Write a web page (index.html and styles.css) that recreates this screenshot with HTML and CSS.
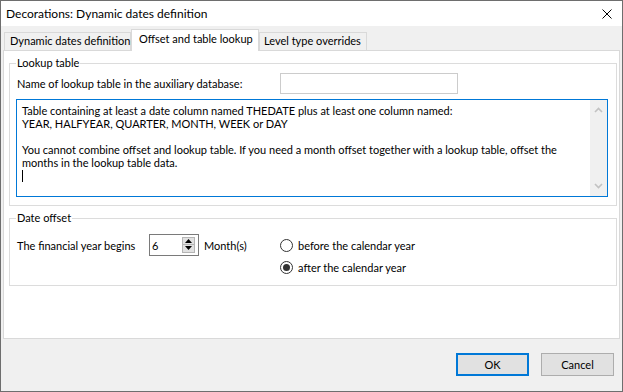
FILE: index.html
```html
<!DOCTYPE html>
<html lang="en">
<head>
    <meta charset="UTF-8">
    <meta name="viewport" content="width=device-width, initial-scale=1.0">
    <title>Decorations: Dynamic dates definition</title>
    <link rel="stylesheet" href="styles.css">
</head>
<body>
    <div class="window">
        <div class="titlebar">
            <span class="title">Decorations: Dynamic dates definition</span>
            <svg class="close" width="10" height="10" viewBox="0 0 10 10">
                <path d="M0.5 0.5 L9.5 9.5 M9.5 0.5 L0.5 9.5" stroke="#000" stroke-width="1" fill="none"/>
            </svg>
        </div>

        <div class="client">
            <div class="tabs">
                <div class="tab tab-dates">Dynamic dates definition</div>
                <div class="tab tab-offset selected">Offset and table lookup</div>
                <div class="tab tab-level">Level type overrides</div>
            </div>

            <div class="page">
                <fieldset class="group group-lookup">
                    <legend>Lookup table</legend>
                    <div class="name-row">
                        <label for="lookupName">Name of lookup table in the auxiliary database:</label>
                        <input type="text" id="lookupName" class="textbox">
                    </div>
                    <div class="memo">
                        <div class="memo-text">
                            Table containing at least a date column named THEDATE plus at least one column named:<br>
                            YEAR, HALFYEAR, QUARTER, MONTH, WEEK or DAY<br>
                            <br>
                            You cannot combine offset and lookup table. If you need a month offset together with a lookup table, offset the<br>
                            months in the lookup table data.<br>
                            <span class="caret"></span>
                        </div>
                        <div class="vscroll">
                            <div class="arrow">
                                <svg width="9" height="6" viewBox="0 0 9 6"><path d="M1 5 L4.5 1.5 L8 5" stroke="#c2c2c2" stroke-width="1.6" fill="none"/></svg>
                            </div>
                            <div class="arrow">
                                <svg width="9" height="6" viewBox="0 0 9 6"><path d="M1 1 L4.5 4.5 L8 1" stroke="#c2c2c2" stroke-width="1.6" fill="none"/></svg>
                            </div>
                        </div>
                    </div>
                </fieldset>

                <fieldset class="group group-offset">
                    <legend>Date offset</legend>
                    <div class="offset-row">
                        <div class="begins">
                            <label class="begins-label" for="months">The financial year begins</label>
                            <div class="spinner">
                                <span class="spin-value" id="months">6</span>
                                <div class="spin-buttons">
                                    <div class="spin-btn">
                                        <svg width="7" height="4" viewBox="0 0 7 4"><path d="M0 4 L3.5 0 L7 4 Z" fill="#000"/></svg>
                                    </div>
                                    <div class="spin-btn">
                                        <svg width="7" height="4" viewBox="0 0 7 4"><path d="M0 0 L3.5 4 L7 0 Z" fill="#000"/></svg>
                                    </div>
                                </div>
                            </div>
                            <span class="unit">Month(s)</span>
                        </div>
                        <div class="radios">
                            <div class="radio-row">
                                <span class="radio"></span>
                                <span>before the calendar year</span>
                            </div>
                            <div class="radio-row">
                                <span class="radio checked"></span>
                                <span>after the calendar year</span>
                            </div>
                        </div>
                    </div>
                </fieldset>
            </div>

            <div class="buttons">
                <button class="btn btn-default">OK</button>
                <button class="btn">Cancel</button>
            </div>
        </div>
    </div>
</body>
</html>
```

FILE: styles.css
```css
* {
    box-sizing: border-box;
}

html, body {
    margin: 0;
    padding: 0;
}

body {
    font-family: "Segoe UI", Lato, sans-serif;
    font-size: 11px;
    color: #000;
    background: #fff;
}

.window {
    width: 623px;
    height: 392px;
    border: 1px solid #6e6e6e;
    display: flex;
    flex-direction: column;
}

/* Title bar */
.titlebar {
    height: 25px;
    background: #fff;
    display: flex;
    align-items: center;
    padding: 0 10px 0 5px;
}

.title {
    flex: 1;
    font-size: 12px;
}

.close {
    display: block;
}

/* Client area */
.client {
    flex: 1;
    background: #f0f0f0;
    display: flex;
    flex-direction: column;
    padding: 0 2px;
}

.tabs {
    height: 24px;
    display: flex;
    align-items: flex-end;
    padding-left: 1px;
}

.tab {
    height: 18px;
    line-height: 16px;
    border: 1px solid #d9d9d9;
    border-bottom: none;
    padding-left: 5px;
    white-space: nowrap;
}

.tab-dates {
    width: 127px;
}

.tab-offset {
    width: 128px;
}

.tab-level {
    width: 108px;
    padding-left: 4px;
}

.tab.selected {
    height: 22px;
    padding-top: 1px;
    padding-left: 7px;
    margin-bottom: -1px;
    background: #fff;
    position: relative;
    z-index: 1;
}

.page {
    flex: 1;
    background: #fff;
    border: 1px solid #d9d9d9;
    padding: 0 2px 0 5px;
}

/* Group boxes */
.group {
    border: 1px solid #dcdcdc;
    margin: 5px 0 0;
    min-width: 0;
}

.group legend {
    padding: 0 1px;
    line-height: 14px;
}

.group-lookup {
    padding: 3px 8px 8px 6px;
}

.group-offset {
    padding: 9px 8px 7px 6px;
}

.name-row {
    display: flex;
    align-items: center;
    height: 21px;
}

.name-row label {
    width: 264px;
    padding-left: 1px;
}

.textbox {
    width: 178px;
    height: 21px;
    border: 1px solid #cccccc;
    margin: 0;
    padding: 0 3px;
    font: inherit;
    outline: none;
}

.memo {
    margin-top: 5px;
    height: 98px;
    border: 1px solid #0078d7;
    display: flex;
}

.memo-text {
    flex: 1;
    padding: 4px 5px 0;
    line-height: 13px;
    white-space: nowrap;
}

.caret {
    display: inline-block;
    width: 1px;
    height: 12px;
    background: #000;
    vertical-align: -2px;
}

.vscroll {
    width: 17px;
    background: #f0f0f0;
    display: flex;
    flex-direction: column;
    justify-content: space-between;
}

.arrow {
    height: 20px;
    display: flex;
    align-items: center;
    justify-content: center;
}

.arrow svg {
    display: block;
}

/* Date offset */
.offset-row {
    display: flex;
    align-items: flex-start;
}

.begins {
    width: 264px;
    height: 22px;
    display: flex;
    align-items: center;
}

.begins-label {
    width: 133px;
    padding-left: 1px;
}

.spinner {
    width: 50px;
    height: 22px;
    border: 1px solid #7a7a7a;
    display: flex;
    align-items: center;
}

.spin-value {
    flex: 1;
    padding-left: 2px;
}

.spin-buttons {
    width: 13px;
    margin-right: 3px;
    margin-bottom: 1px;
    display: flex;
    flex-direction: column;
}

.spin-btn {
    height: 8px;
    background: #e1e1e1;
    border: 1px solid #b5b5b5;
    display: flex;
    align-items: center;
    justify-content: center;
}

.spin-btn + .spin-btn {
    margin-top: -1px;
    height: 9px;
}

.unit {
    margin-left: 5px;
}

.radios {
    display: flex;
    flex-direction: column;
}

.radio-row {
    height: 22px;
    display: flex;
    align-items: center;
}

.radio {
    width: 13px;
    height: 13px;
    border: 1px solid #333;
    border-radius: 50%;
    background: #fff;
    margin-right: 5px;
    display: flex;
    align-items: center;
    justify-content: center;
}

.radio.checked::after {
    content: "";
    width: 7px;
    height: 7px;
    border-radius: 50%;
    background: #333;
}

/* Dialog buttons */
.buttons {
    height: 52px;
    display: flex;
    justify-content: flex-end;
    align-items: flex-start;
    gap: 12px;
    padding: 14px 6px 0 0;
}

.btn {
    width: 73px;
    height: 23px;
    margin: 0;
    padding: 0;
    border: 1px solid #adadad;
    background: #e1e1e1;
    font: inherit;
    color: #000;
}

.btn-default {
    border: 2px solid #0078d7;
}
```
